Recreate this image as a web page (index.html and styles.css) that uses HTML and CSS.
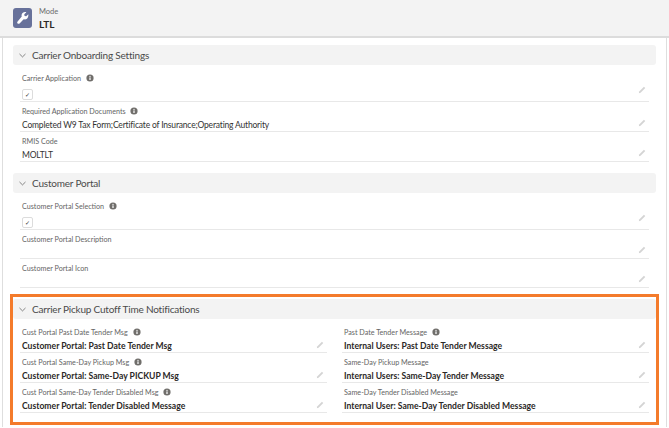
FILE: index.html
```html
<!DOCTYPE html>
<html lang="en">
<head>
  <meta charset="UTF-8">
  <title>Mode LTL</title>
  <link rel="stylesheet" href="styles.css">
</head>
<body>

<svg class="defs" width="0" height="0">
  <symbol id="pencil" viewBox="0 0 10 10">
    <path d="M1 9l.5-2.200L7.400.9l1.700 1.700L3.200 8.500z" fill="#d4d4d4"/>
  </symbol>
  <symbol id="chevron" viewBox="0 0 10 6">
    <path d="M.7.8L5 5l4.300-4.200" fill="none" stroke="#555" stroke-width="1"/>
  </symbol>
  <symbol id="info" viewBox="0 0 8 8">
    <circle cx="4" cy="4" r="3.600" fill="#706e6b"/>
    <rect x="3.400" y="3.400" width="1.200" height="2.600" fill="#fff"/>
    <rect x="3.400" y="1.900" width="1.200" height="1" fill="#fff"/>
  </symbol>
</svg>

<header class="page-header">
  <div class="header-icon">
    <svg viewBox="0 0 20 20" width="14" height="14">
      <path d="M17.600 4.600l-3 3-2.300-.5-.5-2.300 3-3c-1.900-.6-4-.2-5.400 1.200-1.400 1.400-1.800 3.300-1.200 5L2.300 14.900c-.8.8-.8 2 0 2.800s2 .8 2.800 0L11 11.800c1.700.5 3.600.1 5-1.200 1.400-1.400 1.900-4.100 1.600-6z" fill="#fff"/>
    </svg>
  </div>
  <div>
    <div class="header-label">Mode</div>
    <div class="header-title">LTL</div>
  </div>
</header>

<main class="content">

  <section class="section">
    <h3 class="section-head"><svg class="chevron"><use href="#chevron"/></svg>Carrier Onboarding Settings</h3>
    <div class="rows">
      <div class="field field-check">
        <div class="field-label">Carrier Application <svg class="info"><use href="#info"/></svg></div>
        <div class="field-value"><span class="check">&#10003;</span></div>
        <svg class="pencil"><use href="#pencil"/></svg>
      </div>
      <div class="field">
        <div class="field-label">Required Application Documents <svg class="info"><use href="#info"/></svg></div>
        <div class="field-value">Completed W9 Tax Form;Certificate of Insurance;Operating Authority</div>
        <svg class="pencil"><use href="#pencil"/></svg>
      </div>
      <div class="field">
        <div class="field-label">RMIS Code</div>
        <div class="field-value">MOLTLT</div>
        <svg class="pencil"><use href="#pencil"/></svg>
      </div>
    </div>
  </section>

  <section class="section">
    <h3 class="section-head"><svg class="chevron"><use href="#chevron"/></svg>Customer Portal</h3>
    <div class="rows">
      <div class="field field-check">
        <div class="field-label">Customer Portal Selection <svg class="info"><use href="#info"/></svg></div>
        <div class="field-value"><span class="check">&#10003;</span></div>
        <svg class="pencil"><use href="#pencil"/></svg>
      </div>
      <div class="field field-empty">
        <div class="field-label">Customer Portal Description</div>
        <svg class="pencil"><use href="#pencil"/></svg>
      </div>
      <div class="field field-empty">
        <div class="field-label">Customer Portal Icon</div>
        <svg class="pencil"><use href="#pencil"/></svg>
      </div>
    </div>
  </section>

  <section class="section section-marked">
    <h3 class="section-head"><svg class="chevron"><use href="#chevron"/></svg>Carrier Pickup Cutoff Time Notifications</h3>
    <div class="rows rows-two">
      <div class="field">
        <div class="field-label">Cust Portal Past Date Tender Msg <svg class="info"><use href="#info"/></svg></div>
        <div class="field-value bold">Customer Portal: Past Date Tender Msg</div>
        <svg class="pencil"><use href="#pencil"/></svg>
      </div>
      <div class="field">
        <div class="field-label">Past Date Tender Message <svg class="info"><use href="#info"/></svg></div>
        <div class="field-value bold">Internal Users: Past Date Tender Message</div>
        <svg class="pencil"><use href="#pencil"/></svg>
      </div>
      <div class="field">
        <div class="field-label">Cust Portal Same-Day Pickup Msg <svg class="info"><use href="#info"/></svg></div>
        <div class="field-value bold">Customer Portal: Same-Day PICKUP Msg</div>
        <svg class="pencil"><use href="#pencil"/></svg>
      </div>
      <div class="field">
        <div class="field-label">Same-Day Pickup Message</div>
        <div class="field-value bold">Internal Users: Same-Day Tender Message</div>
        <svg class="pencil"><use href="#pencil"/></svg>
      </div>
      <div class="field">
        <div class="field-label">Cust Portal Same-Day Tender Disabled Msg <svg class="info"><use href="#info"/></svg></div>
        <div class="field-value bold">Customer Portal: Tender Disabled Message</div>
        <svg class="pencil"><use href="#pencil"/></svg>
      </div>
      <div class="field">
        <div class="field-label">Same-Day Tender Disabled Message</div>
        <div class="field-value bold">Internal User: Same-Day Tender Disabled Message</div>
        <svg class="pencil"><use href="#pencil"/></svg>
      </div>
    </div>
  </section>

</main>

</body>
</html>
```

FILE: styles.css
```css
html, body {
  margin: 0;
  height: 428px;
  overflow: hidden;
}
body {
  font-family: 'Lato', 'Open Sans', sans-serif;
  background: #fff;
  color: #2b2826;
}
.defs {
  display: block;
}
.page-header {
  display: flex;
  align-items: center;
  gap: 7px;
  height: 36px;
  padding-left: 13px;
  background: #f3f3f3;
  border-bottom: 2px solid #dcdcdc;
  box-sizing: content-box;
}
.header-icon {
  width: 19px;
  height: 20px;
  background: #67719a;
  border-radius: 3px;
  display: flex;
  align-items: center;
  justify-content: center;
}
.header-label {
  font-size: 7.5px;
  line-height: 12px;
  color: #6b6b6b;
}
.header-title {
  font-size: 10px;
  line-height: 13px;
  font-weight: 700;
}
.content {
  margin: 0 2px;
  padding: 7px 10px 0 10px;
  height: 382px;
  border-left: 1px solid #dedede;
  border-right: 1px solid #dedede;
  box-sizing: content-box;
}
.section {
  margin-bottom: 11px;
}
.section-head {
  display: flex;
  align-items: center;
  gap: 6px;
  height: 20px;
  margin: 0;
  padding-left: 6px;
  background: #f3f3f3;
  border-radius: 3px;
  font-size: 10px;
  letter-spacing: -.2px;
  font-weight: 400;
  color: #4a4a4a;
}
.chevron {
  width: 7px;
  height: 5px;
}
.rows {
  padding: 0 7px;
}
.rows-two {
  display: grid;
  grid-template-columns: 307px 307px;
  column-gap: 15px;
  padding-top: 4px;
}
.field {
  position: relative;
  height: 30px;
  box-sizing: border-box;
  padding: 4px 0 0 2px;
  border-bottom: 1px solid #e8e8e8;
}
.field-check {
  height: 37px;
  padding-top: 8px;
}
.field-empty {
  height: 29px;
}
.field-label {
  font-size: 7.2px;
  line-height: 11px;
  color: #656565;
}
.field-value {
  margin-top: 1px;
  font-size: 8.5px;
  line-height: 15px;
  letter-spacing: -.18px;
  color: #333;
}
.field-value.bold {
  font-size: 8.6px;
  letter-spacing: 0;
  font-weight: 700;
  color: #2b2826;
}
.check {
  display: inline-flex;
  align-items: center;
  justify-content: center;
  width: 9px;
  height: 9px;
  margin-top: 4px;
  border: 1px solid #dcdcdc;
  border-radius: 2px;
  font-size: 6px;
  line-height: 1;
}
.info {
  width: 8px;
  height: 8px;
  margin-left: 3px;
  vertical-align: -1px;
}
.pencil {
  position: absolute;
  right: 3px;
  bottom: 4px;
  width: 8px;
  height: 8px;
}
.field-check .pencil {
  bottom: 7px;
}
.rows-two .pencil {
  bottom: 3px;
}
.section-marked {
  margin: -5px -3px 0;
  padding: 2px 0 9px;
  border: 3px solid #f47b2b;
  box-sizing: content-box;
}
```
